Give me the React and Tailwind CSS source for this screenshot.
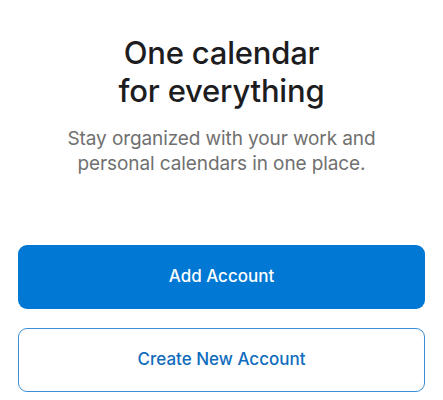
export default function App() {
  return (
    <div className="min-h-[400px] bg-white px-[18px] pt-[34px]" style={{ fontFamily: "Inter, 'Noto Sans', sans-serif" }}>
      <h1 className="text-center text-[31px] font-medium leading-[38px] tracking-[-0.2px] text-[#1d1d1f]">
        One calendar
        <br />
        for everything
      </h1>
      <p className="mt-[16px] text-center text-[19px] leading-[25px] tracking-[-0.1px] text-[#707070]">
        Stay organized with your work and
        <br />
        personal calendars in one place.
      </p>

      <div className="mt-[69px] flex flex-col gap-[19px]">
        <button className="h-[64px] w-full rounded-[9px] bg-[#0078d4] text-[17px] font-medium text-white">
          Add Account
        </button>
        <button className="h-[64px] w-full rounded-[9px] border border-[#3a8fd6] bg-white text-[17px] font-medium text-[#0f6cbd]">
          Create New Account
        </button>
      </div>
    </div>
  );
}
